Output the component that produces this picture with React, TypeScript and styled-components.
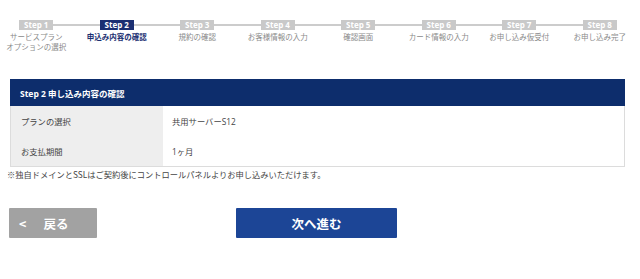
import React from "react";
import styled, { createGlobalStyle } from "styled-components";

const Global = createGlobalStyle`
  html, body { margin: 0; padding: 0; background: #ffffff; }
  body { font-family: "Open Sans", "Noto Sans CJK JP", sans-serif; }
`;

const Page = styled.div`
  width: 640px;
  padding-top: 20px;
  box-sizing: border-box;
`;

const Steps = styled.ol`
  list-style: none;
  margin: 0 0 0 -4px;
  padding: 0;
  width: 644px;
  display: grid;
  grid-template-columns: repeat(8, 1fr);
  background: linear-gradient(#cccccc, #cccccc) no-repeat;
  background-size: calc(100% - 80px) 2px;
  background-position: 40px 4px;
`;

const Step = styled.li`
  display: flex;
  flex-direction: column;
  align-items: center;
`;

const Badge = styled.span<{ $active?: boolean }>`
  display: flex;
  align-items: center;
  justify-content: center;
  width: 34px;
  height: 10px;
  background: ${(p) => (p.$active ? "#1b2f72" : "#c9c9c9")};
  color: #ffffff;
  font-family: "Open Sans", sans-serif;
  font-weight: 700;
  font-size: 8px;
  line-height: 10px;
  white-space: nowrap;
`;

const StepLabel = styled.span<{ $active?: boolean }>`
  margin-top: 2px;
  font-family: "Noto Sans CJK JP", sans-serif;
  font-size: 7.5px;
  line-height: 10px;
  text-align: center;
  color: ${(p) => (p.$active ? "#1b2f72" : "#8a8a8a")};
  font-weight: ${(p) => (p.$active ? 700 : 400)};
  white-space: nowrap;
`;

const Table = styled.div`
  margin: 27px 0 0 10px;
  width: 615px;
  border: 1px solid #dcdcdc;
  border-top: none;
  box-sizing: border-box;
`;

const Header = styled.div`
  height: 27px;
  background: #0d2d6c;
  color: #ffffff;
  display: flex;
  align-items: center;
  padding-left: 10px;
  margin: 0 -1px;
  font-family: "Open Sans", "Noto Sans CJK JP", sans-serif;
  font-weight: 700;
  font-size: 8.5px;
`;

const Row = styled.div`
  display: grid;
  grid-template-columns: 152px 1fr;
  height: 30px;
`;

const Cell = styled.div<{ $label?: boolean }>`
  display: flex;
  align-items: center;
  padding-left: ${(p) => (p.$label ? "10px" : "9px")};
  background: ${(p) => (p.$label ? "#eeeeee" : "#ffffff")};
  color: #444444;
  font-family: "Open Sans", "Noto Sans CJK JP", sans-serif;
  font-size: 8.3px;
`;

const Note = styled.p`
  margin: 1px 0 0 7px;
  font-family: "Noto Sans CJK JP", sans-serif;
  font-size: 8.25px;
  line-height: 12px;
  color: #444444;
`;

const Buttons = styled.div`
  display: flex;
  margin-top: 28px;
  padding-left: 9px;
  gap: 139px;
`;

const Button = styled.button<{ $primary?: boolean }>`
  height: 30px;
  width: ${(p) => (p.$primary ? "161px" : "88px")};
  border: none;
  border-radius: 1px;
  background: ${(p) => (p.$primary ? "#1c4596" : "#a2a2a2")};
  color: #ffffff;
  font-family: "Noto Sans CJK JP", sans-serif;
  font-weight: 700;
  font-size: 12.5px;
  display: flex;
  align-items: center;
  justify-content: ${(p) => (p.$primary ? "center" : "flex-start")};
  padding: ${(p) => (p.$primary ? "0" : "0 0 0 10px")};
  gap: 17px;
  cursor: pointer;
`;

const steps = [
  "サービスプラン\nオプションの選択",
  "申込み内容の確認",
  "規約の確認",
  "お客様情報の入力",
  "確認画面",
  "カード情報の入力",
  "お申し込み仮受付",
  "お申し込み完了",
];

export default function App() {
  return (
    <Page>
      <Global />
      <Steps>
        {steps.map((label, i) => (
          <Step key={i}>
            <Badge $active={i === 1}>Step {i + 1}</Badge>
            <StepLabel $active={i === 1}>
              {label.split("\n").map((l, j) => (
                <div key={j}>{l}</div>
              ))}
            </StepLabel>
          </Step>
        ))}
      </Steps>
      <Table>
        <Header>Step 2 申し込み内容の確認</Header>
        <Row>
          <Cell $label>プランの選択</Cell>
          <Cell>共用サーバーS12</Cell>
        </Row>
        <Row>
          <Cell $label>お支払期間</Cell>
          <Cell>1ヶ月</Cell>
        </Row>
      </Table>
      <Note>※独自ドメインとSSLはご契約後にコントロールパネルよりお申し込みいただけます。</Note>
      <Buttons>
        <Button>
          <span>&lt;</span>
          <span>戻る</span>
        </Button>
        <Button $primary>次へ進む</Button>
      </Buttons>
    </Page>
  );
}
